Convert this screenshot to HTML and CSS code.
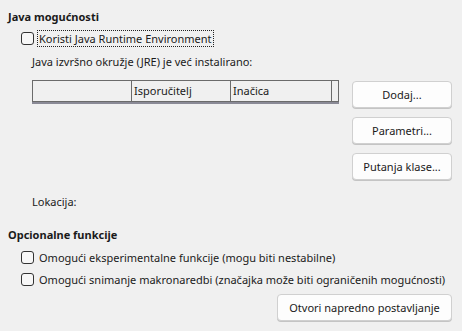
FILE: index.html
```html
<!DOCTYPE html>
<html lang="hr">
<head>
<meta charset="utf-8">
<link rel="stylesheet" href="styles.css">
</head>
<body>
<div class="page">
  <div class="heading">Java mogućnosti</div>
  <div class="check-row first">
    <span class="box"></span>
    <span class="label focus">Koristi Java Runtime Environment</span>
  </div>
  <div class="indent-text jre">Java izvršno okružje (JRE) je već instalirano:</div>
  <div class="main">
    <div class="table">
      <div class="thead">
        <div class="col c1"></div>
        <div class="col c2">Isporučitelj</div>
        <div class="col c3">Inačica</div>
        <div class="col c4"></div>
      </div>
    </div>
    <div class="buttons">
      <div class="btn">Dodaj...</div>
      <div class="btn">Parametri...</div>
      <div class="btn">Putanja klase...</div>
    </div>
  </div>
  <div class="indent-text loc">Lokacija:</div>
  <div class="heading opt">Opcionalne funkcije</div>
  <div class="check-row">
    <span class="box"></span>
    <span class="label">Omogući eksperimentalne funkcije (mogu biti nestabilne)</span>
  </div>
  <div class="check-row">
    <span class="box"></span>
    <span class="label">Omogući snimanje makronaredbi (značajka može biti ograničenih mogućnosti)</span>
  </div>
  <div class="bottom">
    <div class="btn wide">Otvori napredno postavljanje</div>
  </div>
</div>
</body>
</html>
```
FILE: styles.css
```css
html, body {
  margin: 0;
  padding: 0;
  background: #f0f0f0;
}
body {
  width: 462px;
  height: 331px;
  overflow: hidden;
  font-family: "Noto Sans", "Open Sans", sans-serif;
  font-size: 11px;
  color: #1a1a1a;
}
.page {
  display: flex;
  flex-direction: column;
  padding: 9px 10px 0 8px;
}
.heading {
  font-weight: bold;
  line-height: 16px;
  height: 16px;
}
.check-row {
  display: flex;
  align-items: center;
  gap: 4px;
  height: 22px;
  padding-left: 13px;
  white-space: nowrap;
}
.check-row.first {
  margin-top: 2px;
}
.box {
  width: 11px;
  height: 11px;
  border: 1px solid #333;
  border-radius: 3px;
  background: #f7f7f7;
  flex: none;
}
.label {
  line-height: 15px;
  padding: 0 1px;
}
.focus {
  outline: 1px dotted #222;
  outline-offset: 0;
}
.indent-text {
  padding-left: 24px;
  line-height: 16px;
}
.jre {
  margin-top: 5px;
}
.main {
  display: flex;
  margin-top: 10px;
  padding-left: 24px;
  gap: 13px;
}
.table {
  width: 307px;
  height: 23px;
}
.thead {
  display: flex;
  height: 20px;
  border: 1px solid #6b6b6b;
  box-shadow: 0 2px 0 #8a8a96;
}
.col {
  line-height: 20px;
  padding-left: 2px;
  border-right: 1px solid #6b6b6b;
}
.c1 { width: 96px; }
.c2 { width: 96px; }
.c3 { width: 98px; }
.c4 { flex: 1; border-right: none; }
.buttons {
  display: flex;
  flex-direction: column;
  gap: 9px;
  margin-top: 1px;
}
.btn {
  width: 98px;
  height: 25px;
  border: 1px solid #d0d0d0;
  border-radius: 4px;
  background: #fdfdfd;
  display: flex;
  align-items: center;
  justify-content: center;
  box-shadow: 0 1px 0 #c4c4c4;
}
.loc {
  margin-top: 14px;
}
.opt {
  margin-top: 17px;
  margin-bottom: 3px;
}
.bottom {
  display: flex;
  justify-content: flex-end;
  margin-top: 4px;
}
.btn.wide {
  width: 173px;
}
```
